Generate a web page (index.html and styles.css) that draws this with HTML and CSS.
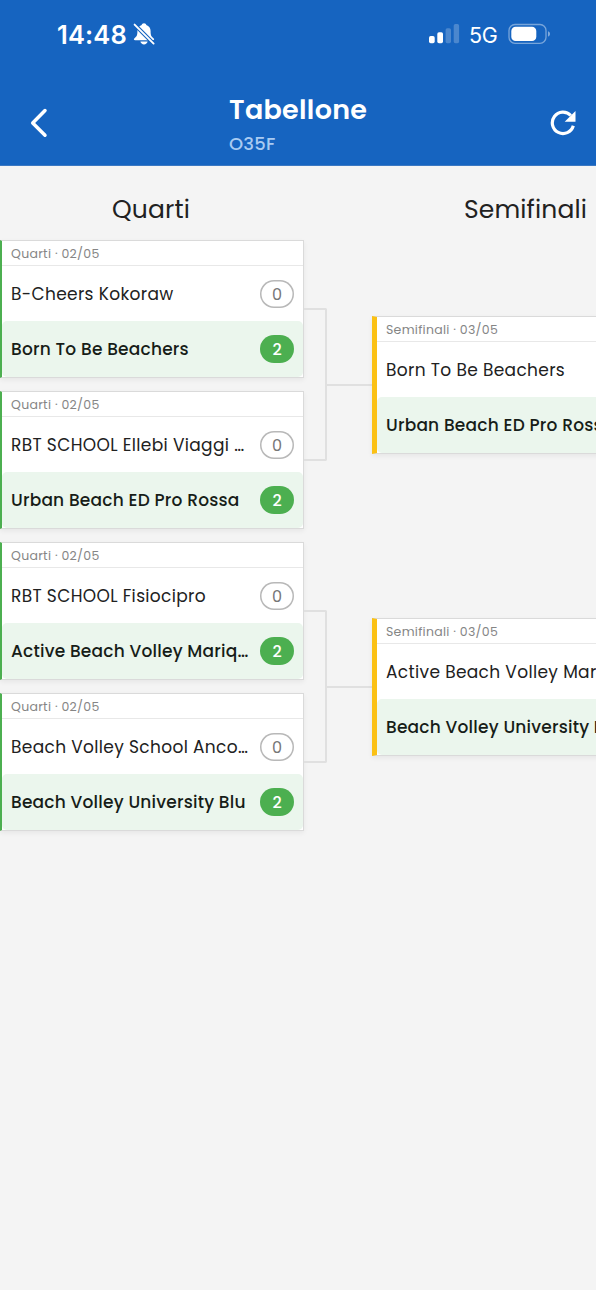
FILE: index.html
```html
<!DOCTYPE html>
<html lang="it">
<head>
<meta charset="utf-8">
<meta name="viewport" content="width=device-width, initial-scale=1">
<title>Tabellone</title>
<link rel="stylesheet" href="styles.css">
</head>
<body>
<header class="top">
  <div class="status">
    <span class="time">14:48</span>
    <svg class="bell" width="22" height="24" viewBox="0 0 22 24">
      <path d="M11 1.200c1.300 0 2.100.8 2.300 1.700 2.700.9 4.300 3.200 4.300 6.200 0 4.100.5 5.400 2.900 7.100 1.100.9.700 2-.7 2H2.200c-1.400 0-1.800-1.100-.7-2C3.900 14.500 4.400 13.200 4.400 9.100c0-3 1.600-5.300 4.300-6.200C8.900 2 9.700 1.200 11 1.200z" fill="#fff"/>
      <path d="M7.400 19.600h7.200c-.3 1.700-1.900 2.900-3.600 2.900s-3.300-1.200-3.600-2.900z" fill="#fff"/>
      <path d="M0 1L22 23" stroke="#1664c0" stroke-width="4"/>
      <path d="M1.600 2.600L20.600 21.600" stroke="#fff" stroke-width="1.900" stroke-linecap="round"/>
    </svg>
    <svg class="signal" width="31" height="20" viewBox="0 0 31 20" fill="#fff">
      <rect x="0" y="12" width="5.700" height="7.300" rx="1.700"/>
      <rect x="8.300" y="8.300" width="5.700" height="11" rx="1.700"/>
      <rect x="16.600" y="4.200" width="5.400" height="15.100" rx="1.700" opacity=".23"/>
      <rect x="24.700" y="0" width="5.400" height="19.300" rx="1.700" opacity=".23"/>
    </svg>
    <span class="net">5G</span>
    <svg class="battery" width="43" height="22" viewBox="0 0 43 22">
      <rect x="1" y="1.500" width="37" height="18.800" rx="6" fill="none" stroke="#fff" stroke-opacity="0.42" stroke-width="1.300"/>
      <rect x="3.300" y="3.700" width="25" height="14.400" rx="4.300" fill="#fff"/>
      <path d="M40 8.200c1.400.5 2 1.500 2 2.700s-.6 2.200-2 2.700z" fill="#fff" opacity=".45"/>
    </svg>
  </div>
  <nav class="bar">
    <svg class="back" width="20" height="32" viewBox="0 0 20 32"><path d="M17 3.500L4.700 16 17 28.200" fill="none" stroke="#fff" stroke-width="3.500" stroke-linecap="round" stroke-linejoin="round"/></svg>
    <div class="titles"><h1 class="title">Tabellone</h1><p class="sub">O35F</p></div>
    <svg class="refresh" width="26" height="26" viewBox="0 0 26 26"><path d="M20.800 5.500A10.700 10.700 0 1 0 23.300 15.800" fill="none" stroke="#fff" stroke-width="3.200"/><path d="M25.500 1v10.800H14.700z" fill="#fff"/></svg>
  </nav>
</header>
<main class="board">
  <section class="round">
    <h2 class="round-title quarti">Quarti</h2>
    <article class="match"><p class="meta">Quarti · 02/05</p>
      <div class="team"><span class="name">B-Cheers Kokoraw</span><span class="score">0</span></div>
      <div class="team win"><span class="name">Born To Be Beachers</span><span class="score">2</span></div></article>
    <article class="match"><p class="meta">Quarti · 02/05</p>
      <div class="team"><span class="name">RBT SCHOOL Ellebi Viaggi …</span><span class="score">0</span></div>
      <div class="team win"><span class="name">Urban Beach ED Pro Rossa</span><span class="score">2</span></div></article>
    <article class="match"><p class="meta">Quarti · 02/05</p>
      <div class="team"><span class="name">RBT SCHOOL Fisiocipro</span><span class="score">0</span></div>
      <div class="team win"><span class="name">Active Beach Volley Mariq…</span><span class="score">2</span></div></article>
    <article class="match"><p class="meta">Quarti · 02/05</p>
      <div class="team"><span class="name">Beach Volley School Anco…</span><span class="score">0</span></div>
      <div class="team win"><span class="name">Beach Volley University Blu</span><span class="score">2</span></div></article>
  </section>
  <div class="links">
    <div class="link"><i class="fork"></i><i class="stem"></i></div>
    <div class="link"><i class="fork"></i><i class="stem"></i></div>
  </div>
  <section class="round semis">
    <h2 class="round-title">Semifinali</h2>
    <article class="match"><p class="meta">Semifinali · 03/05</p>
      <div class="team"><span class="name">Born To Be Beachers</span></div>
      <div class="team win"><span class="name">Urban Beach ED Pro Rossa</span></div></article>
    <article class="match"><p class="meta">Semifinali · 03/05</p>
      <div class="team"><span class="name">Active Beach Volley Mariq…</span></div>
      <div class="team win"><span class="name">Beach Volley University Blu</span></div></article>
  </section>
</main>
</body>
</html>
```
FILE: styles.css
```css
* { box-sizing: border-box; margin: 0; padding: 0; }
body {
  height: 1290px;
  overflow: hidden;
  background: #f4f4f4;
  color: #212121;
  font-family: Poppins, Inter, "Open Sans", sans-serif;
}
svg { display: block; flex: none; }
.top { height: 166px; background: #1664c0; color: #fff; border-bottom: 1px solid #3b78c2; }
.status { display: flex; align-items: center; height: 68px; padding-left: 57px; font-family: Inter, sans-serif; }
.time { flex: none; width: 76px; font-size: 25.500px; font-weight: 600; letter-spacing: .15px; white-space: nowrap; }
.signal { margin-left: 274px; }
.net { flex: none; width: 39px; margin-left: 9px; padding-top: 1px; font-size: 21.500px; letter-spacing: -.3px; }
.bar { display: flex; height: 97px; padding-left: 28px; }
.back { margin-top: 39px; }
.titles { width: 321px; margin-left: 181px; }
.title { margin-top: 24px; font-size: 27px; line-height: 36px; font-weight: 600; letter-spacing: .3px; }
.sub { margin-top: 5px; font-size: 18px; line-height: 22px; font-weight: 500; letter-spacing: .2px; color: #a9cbf2; }
.refresh { margin-top: 42px; }

.board { display: flex; width: 100%; overflow: hidden; }
.round { flex: none; display: flex; flex-direction: column; width: 304px; }
.round-title { height: 74px; padding: 25px 0 0 1px; text-align: center; font-size: 25px; line-height: 38px; font-weight: 400; letter-spacing: .15px; }
.quarti { padding-right: 3px; }
.match {
  flex: none;
  height: 138px;
  margin-bottom: 13px;
  background: #fff;
  border: 1px solid #dadada;
  border-left: 2px solid #4caf50;
  box-shadow: 0 2px 5px rgba(0, 0, 0, .06);
}
.meta { height: 25px; padding-left: 9px; border-bottom: 1px solid #e8e8e8; font-size: 12.500px; line-height: 26px; letter-spacing: .28px; color: #858585; white-space: nowrap; }
.team { display: flex; align-items: center; justify-content: space-between; height: 55px; padding: 1px 9px 0; border-radius: 5px; }
.team.win { height: 56px; padding: 0 9px; background: #ebf6ed; font-weight: 500; color: #171d18; }
.name { font-size: 17px; letter-spacing: .34px; white-space: nowrap; }
.win .name { letter-spacing: .2px; }
.score { display: flex; flex: none; align-items: center; justify-content: center; width: 34px; height: 28px; box-shadow: inset 0 0 0 1.500px #b8b8b8; border-radius: 14px; font-size: 16px; color: #777; }
.win .score { background: #4caf50; box-shadow: none; color: #fff; }

.links { flex: none; display: flex; flex-direction: column; gap: 149px; width: 68px; padding-top: 142px; }
.link { display: flex; align-items: center; height: 153px; }
.fork { width: 23px; height: 153px; border: 2px solid #e0e0e0; border-left: 0; border-radius: 0 2px 2px 0; }
.stem { width: 45px; height: 2px; background: #e0e0e0; }
.semis { width: 306px; }
.semis .round-title { height: 150px; }
.semis .match { margin-bottom: 164px; border-left: 5px solid #fbc114; }
```
